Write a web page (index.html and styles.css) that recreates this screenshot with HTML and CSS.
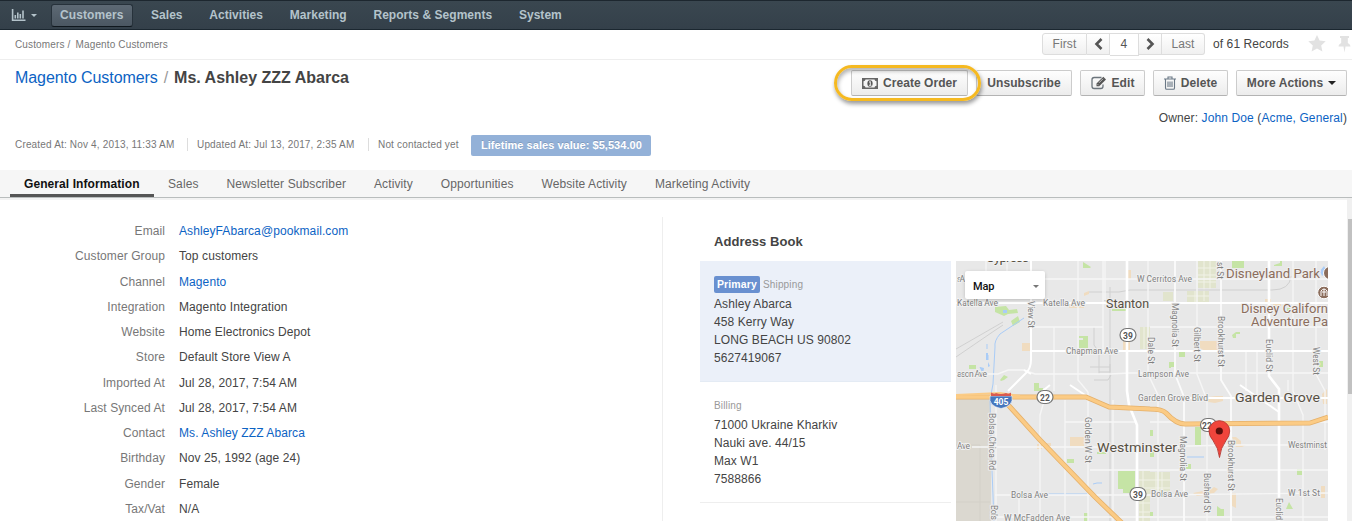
FILE: index.html
```html
<!DOCTYPE html>
<html lang="en">
<head>
<meta charset="utf-8">
<title>Ms. Ashley ZZZ Abarca - Magento Customers</title>
<link rel="stylesheet" href="styles.css">
</head>
<body>
<nav class="topbar">
  <a class="dash">
    <svg width="15" height="12" viewBox="0 0 15 12"><path d="M1.600 0V11.200H14.500M4.300 9.500V6M6.800 9.500V3.500M9.300 9.500V5M12 9.500V1.500" fill="none" stroke="#b4c3cb" stroke-width="1.600"/></svg>
    <i class="caret"></i>
  </a>
  <a class="item active">Customers</a>
  <a class="item">Sales</a>
  <a class="item">Activities</a>
  <a class="item">Marketing</a>
  <a class="item">Reports &amp; Segments</a>
  <a class="item">System</a>
</nav>
<header class="crumbs">
  <div class="trail"><span>Customers</span><span class="sep">/</span><span>Magento Customers</span></div>
  <div class="pager">
    <div class="pages">
      <a class="first">First</a>
      <a class="arrow"><svg width="9" height="12" viewBox="0 0 9 12"><path d="M7.5 1 2.5 6l5 5" fill="none" stroke="#555" stroke-width="2.6"/></svg></a>
      <a class="num">4</a>
      <a class="arrow"><svg width="9" height="12" viewBox="0 0 9 12"><path d="M1.5 1l5 5-5 5" fill="none" stroke="#555" stroke-width="2.6"/></svg></a>
      <a class="last">Last</a>
    </div>
    <span class="total">of 61 Records</span>
    <svg class="star" width="18" height="17" viewBox="0 0 18 17"><path d="M9 0l2.6 5.6 6.1.7-4.5 4.2 1.2 6L9 13.5l-5.4 3 1.2-6L.3 6.3l6.1-.7z" fill="#e2e2e2"/></svg>
    <svg class="pin" width="13" height="17" viewBox="0 0 13 17"><path d="M2 0h9v2H9.800v5c1.500.7 2.700 2 2.700 3.500H7.500L6.500 16.500 5.500 10.500H.5C.5 9 1.700 7.700 3.200 7V2H2z" fill="#e2e2e2"/></svg>
  </div>
</header>
<section class="heading">
  <h1><a>Magento Customers</a><span class="slash">/</span><b>Ms. Ashley ZZZ Abarca</b></h1>
  <div class="actions">
    <div class="marked">
      <a class="btn create"><svg width="16" height="11" viewBox="0 0 16 11"><path d="M0 0h16v11H0zM3.500 1.500Q3.300 3 1.500 3.300V7.700Q3.300 8 3.500 9.500H12.500Q12.700 8 14.500 7.700V3.300Q12.700 3 12.500 1.500z" fill="#666" fill-rule="evenodd"/><ellipse cx="8" cy="5.500" rx="2.600" ry="3.300" fill="#555"/><path d="M7 4.300l1.300-.8v3.500M6.900 7.300h2.500" stroke="#eee" stroke-width="1" fill="none"/></svg>Create Order</a>
      <i class="ring"></i>
    </div>
    <a class="btn unsub">Unsubscribe</a>
    <a class="btn edit"><svg width="16" height="14" viewBox="0 0 16 14"><path d="M10.500 1.500H3.200Q1 1.500 1 3.700v6.600q0 2.200 2.200 2.200h6.600q2.200 0 2.200-2.200V8.500" fill="none" stroke="#6c757c" stroke-width="1.300"/><path d="M5.500 10.200V7.500L12.300.7l2.700 2.700-6.800 6.800z" fill="#555"/><path d="M6.600 8.200l1 1M8 6.800l4-4" stroke="#ddd" stroke-width=".8"/></svg>Edit</a>
    <a class="btn delete"><svg width="12" height="14" viewBox="0 0 12 14"><path d="M0 3h12M4 3V1h4v2M1.500 3v9q0 1.300 1.200 1.300h6.600q1.200 0 1.200-1.300V3M4 5.500v5.500M6 5.500v5.500M8 5.500v5.500" fill="none" stroke="#6a7886" stroke-width="1.100"/></svg>Delete</a>
    <a class="btn more">More Actions<i class="caret dark"></i></a>
  </div>
</section>
<div class="owner">Owner: <a>John Doe</a> (<a>Acme, General</a>)</div>
<ul class="stats">
  <li>Created At: Nov 4, 2013, 11:33 AM</li>
  <li>Updated At: Jul 13, 2017, 2:35 AM</li>
  <li>Not contacted yet</li>
  <li class="value">Lifetime sales value: $5,534.00</li>
</ul>
<nav class="tabs">
  <a class="on">General Information</a><a>Sales</a><a>Newsletter Subscriber</a><a>Activity</a><a>Opportunities</a><a>Website Activity</a><a>Marketing Activity</a>
</nav>
<main class="content">
  <dl class="details">
    <dt>Email</dt><dd><a>AshleyFAbarca@pookmail.com</a></dd>
    <dt>Customer Group</dt><dd>Top customers</dd>
    <dt>Channel</dt><dd><a>Magento</a></dd>
    <dt>Integration</dt><dd>Magento Integration</dd>
    <dt>Website</dt><dd>Home Electronics Depot</dd>
    <dt>Store</dt><dd>Default Store View A</dd>
    <dt>Imported At</dt><dd>Jul 28, 2017, 7:54 AM</dd>
    <dt>Last Synced At</dt><dd>Jul 28, 2017, 7:54 AM</dd>
    <dt>Contact</dt><dd><a>Ms. Ashley ZZZ Abarca</a></dd>
    <dt>Birthday</dt><dd>Nov 25, 1992 (age 24)</dd>
    <dt>Gender</dt><dd>Female</dd>
    <dt>Tax/Vat</dt><dd>N/A</dd>
  </dl>
  <section class="book">
    <h2>Address Book</h2>
    <div class="book-body">
      <div class="cards">
        <div class="card primary">
          <div class="types"><span class="tag">Primary</span><span>Shipping</span></div>
          <p>Ashley Abarca</p><p>458 Kerry Way</p><p>LONG BEACH US 90802</p><p>5627419067</p>
        </div>
        <div class="card">
          <div class="types"><span>Billing</span></div>
          <p>71000 Ukraine Kharkiv</p><p>Nauki ave. 44/15</p><p>Max W1</p><p>7588866</p>
        </div>
      </div>
      <div class="map">
        <svg class="canvas" width="372" height="260" viewBox="956 261 372 260">
          <rect x="956" y="261" width="372" height="260" fill="#e8e8e8"/>
          <path d="M956 399H991V521H956z" fill="#dbd8d0"/>
          <path d="M956 445H980V521M956 502H990" fill="none" stroke="#d3d0c8"/>
          <!-- parks -->
          <g fill="#c5e4a5">
            <path d="M1083 262l8 5-1 1h-7zM995 307l11-1 3 4 8-1 1 4-10 1-4 2-9-4zM1011 321l7-5 2 6-7 4zM1079 340h4v-4h5v12h-9zM1079 336h6v2h-6zM969 365h7v4h-7zM1000 380l4-5 4 2-4 3-3 1zM1034 383h5v5h4v3h-9zM1232 261h12v7h-12zM1274 265l6-2v-2h2v5h-8zM1232 335l4-3h4v2h-4v4h-3zM1179 351h6v6h-6zM1169 362h5v5h-3v1h-2zM1319 361h4v6h-4zM1287 308h3v3h-3zM1112 309h14v2h-14zM1118 471h17v22h-12v-4h-5zM1067 459h7v4h-7zM1195 427h6v18h-6zM1150 430h3v6h-3zM1150 451h4v6h-4zM1188 464h3v5h-5v-2h2zM1297 469h5v6h-5zM1217 506l4 3h3v7h-7zM1286 509l3-7 4 7zM1084 513h4v8h-4zM1034 385h3v5h-3zM1097 452h9v2h-9zM1150 512h3v4h-3z"/>
          </g>
          <g fill="#f0dcc0">
            <path d="M1022 343h8v8h-8zM1070 437h14v9h-14zM1200 341h18v9h-10l-3 1-5-3zM1123 340h7v10h-7zM1126 270h5v9h-5zM1069 304l7 2 8-1v3h-15zM1084 293l5-2v3l-5 2zM1265 299h6v3h-6zM1273 302h8v4h-8zM1208 397l8-1h7v5l-8 2-7-1zM1232 437h4l5 4v4h5l-4 2h-6zM1193 493l10-2 3 2 8-6 4 2-4 4-9 2-8 1zM1037 444h5v5h-5zM1045 443h6v6h-6zM1322 394l5-5v15h-4zM1321 486h4v12h-4zM1231 493h5v15l-4-2z"/>
          </g>
          <g fill="#e1e4cd">
            <path d="M1198 261h18v27h-18zM1187 291h22v11h-22zM1163 292h10v9h-10zM1140 327h10v22h-10zM1139 471h11v50h-11zM1150 472h20v23h-20z"/>
          </g>
          <path d="M1204 261V301M1210 261V289M1198 268H1216M1198 275H1216M1198 282H1216M1187 296H1209M1195 291V302M1144 327V349M1143 471V521M1156 472V495M1162 472V495M1139 480H1170M1139 488H1170M1139 503H1150M1139 512H1150" fill="none" stroke="#f1f2e7"/>
          <!-- rail lines -->
          <g fill="none" stroke="#d0d0d0">
            <path d="M956 349L1003 322M956 357L994 331L1003 325M1089 292H1119L1130 290H1272Q1290 290 1291 276M1110 287V521M1094 327V345L1099 352V374M1090 367H1110M1094 380H1108L1111 375M1110 364V372H1099M1104 300L1110 303"/>
          </g>
          <!-- water -->
          <g fill="none" stroke="#a9ccf7">
            <path d="M1024 318L1000 334Q994 341 995 347L993 384 990 400 992 470 994 521M1093 484l4-1 5 0M1187 457h17M1035 494h55M987 344v5M988 355v5M980 367l3 6"/>
          </g>
          <g fill="#a9ccf7"><path d="M1003 310h4v3h-4zM986 353h2v7h-2zM988 362l2 4-2 1zM980 367l4 1-1 6zM1320 271l4-5 3 6-5 4z"/></g>
          <!-- minor streets -->
          <g fill="none" stroke="#f6f6f6" stroke-width="1.400">
            <path d="M956 279H1328M1031 327H1103M1150 327H1328M956 374H998L1008 370H1024L1035 374H1110L1130 373H1328M1065 422H1136M1150 422H1328M972 447H1150L1230 445H1328M1090 470H1328M995 495H1110M1035 495H1150L1328 493M993 517H1328"/>
            <path d="M986 261V279M1007 261V279M1054 327V391M1078 261V380L1088 392M1103 261V351M1105 261V300M1065 400V521M1040 521V415L1045 398 1050 391M1088 392V521M1113 400V521M1148 261V374L1158 395V521M1197 261V374L1207 400V521M1246 350V391M1257 350V395M1293 261V391L1303 415V521M1316 261V374L1325 391V450M1019 498V521M996 385V521M1288 380V391"/>
            <path d="M1175 261V374L1184 397V521M1221 261V380L1231 396V521" stroke="#fbfbfb" stroke-width="1.800"/>
          </g>
          <!-- arterial roads -->
          <g fill="none" stroke="#fff" stroke-width="2">
            <path d="M956 303H1328M1031 351H1328M956 398H1000M1150 398H1328M1031 261V360Q1031 369 1025 374L1008 391M1024 370L1031 374M1050 385L1035 397M1070 385L1088 397M1240 385L1279 412"/>
            <path d="M1127 261V391L1129 405 1137 425V521M1269 261V376L1279 389V521" stroke-width="2.600"/>
          </g>
          <!-- freeways -->
          <g fill="none" stroke-linejoin="round">
            <path d="M956 397H1086L1109 407 1150 409Q1162 409 1166 413Q1176 424 1185 424L1310 423 1328 417M1001 397L1040 440 1095 497 1123 524" stroke="#e5b06a" stroke-width="5"/>
            <path d="M956 397H1086L1109 407 1150 409Q1162 409 1166 413Q1176 424 1185 424L1310 423 1328 417M1001 397L1040 440 1095 497 1123 524" stroke="#fbcb85" stroke-width="3.400"/>
            <path d="M956 395L1000 393 1020 396" stroke="#fbcb85" stroke-width="2"/>
          </g>
          <!-- street labels -->
          <g class="street">
            <text x="957" y="282" textLength="8">s A</text>
            <text x="1137" y="282" textLength="55">W Cerritos Ave</text>
            <text x="957" y="306" textLength="41">Katella Ave</text>
            <text x="1043" y="306" textLength="42">Katella Ave</text>
            <text x="1066" y="354" textLength="52">Chapman Ave</text>
            <text x="957" y="377" textLength="30">ason Ave</text>
            <text x="1138" y="377" textLength="51">Lampson Ave</text>
            <text x="1138" y="401" textLength="70">Garden Grove Blvd</text>
            <text x="957" y="449" textLength="13">Ave</text>
            <text x="1288" y="448" textLength="39">Westminst</text>
            <text x="1011" y="498" textLength="37">Bolsa Ave</text>
            <text x="1151" y="497" textLength="37">Bolsa Ave</text>
            <text x="1288" y="496" textLength="32">W 1st St</text>
            <text x="1004" y="521" textLength="66">W McFadden Ave</text>
            <text transform="translate(1028 301) rotate(90)" textLength="27">View St</text>
            <text transform="translate(1172 303) rotate(90)" textLength="44">Magnolia St</text>
            <text transform="translate(1148 337) rotate(90)" textLength="27">Dale St</text>
            <text transform="translate(1194 327) rotate(90)" textLength="35">Gilbert St</text>
            <text transform="translate(1217 262) rotate(90)" textLength="17">st St</text>
            <text transform="translate(1218 316) rotate(90)" textLength="51">Brookhurst St</text>
            <text transform="translate(1266 339) rotate(90)" textLength="33">Euclid St</text>
            <text transform="translate(1313 347) rotate(90)" textLength="28">West St</text>
            <text transform="translate(989 413) rotate(90)" textLength="57">Bolsa Chica Rd</text>
            <text transform="translate(991 505) rotate(90)" textLength="15">Bols</text>
            <text transform="translate(1085 417) rotate(90)" textLength="46">Golden W St</text>
            <text transform="translate(1180 436) rotate(90)" textLength="45">Magnolia St</text>
            <text transform="translate(1204 473) rotate(90)" textLength="40">Bushard St</text>
            <text transform="translate(1228 440) rotate(90)" textLength="51">Brookhurst St</text>
            <text transform="translate(1276 498) rotate(90)" textLength="22">Euclid</text>
          </g>
          <g class="town">
            <text x="986" y="262" textLength="43">Cypress</text>
            <text x="1106" y="308" textLength="43" lengthAdjust="spacingAndGlyphs">Stanton</text>
            <text x="1097" y="452" textLength="80" lengthAdjust="spacingAndGlyphs">Westminster</text>
            <text x="1235" y="402" textLength="85" lengthAdjust="spacingAndGlyphs">Garden Grove</text>
          </g>
          <g class="sight">
            <text x="1226" y="278" textLength="94" lengthAdjust="spacingAndGlyphs">Disneyland Park</text>
            <text x="1241" y="313" textLength="87" lengthAdjust="spacingAndGlyphs">Disney Californ</text>
            <text x="1251" y="326" textLength="77" lengthAdjust="spacingAndGlyphs">Adventure Pa</text>
          </g>
          <g fill="#8b6d5c" stroke="#fff"><circle cx="1324" cy="292.500" r="6.300"/><circle cx="1330" cy="273" r="6.500"/></g>
          <path d="M1321 296v-5q3-4 6 0v5M1324 289v7M1322 292h4" fill="none" stroke="#fff"/>
          <!-- route shields -->
          <g class="shield">
            <rect x="1120" y="328.500" width="16" height="13" rx="6.500"/><text x="1128" y="338.500">39</text>
            <rect x="1037" y="390.500" width="16" height="13" rx="6.500"/><text x="1045" y="400.500">22</text>
            <rect x="1130" y="487.500" width="16" height="13" rx="6.500"/><text x="1138" y="497.500">39</text>
            <rect x="1200.500" y="418.500" width="16" height="13" rx="6.500"/><text x="1207" y="428.500">22</text>
          </g>
          <path d="M990 396H1012Q1014 406 1001 408.500Q988 406 990 396z" fill="#4676bd" stroke="#fff" stroke-width=".6"/>
          <path d="M991 396V392.500Q994 394.500 996 393Q1001 395 1006 393Q1009 394.500 1011 392.500V396z" fill="#d95a50"/>
          <text class="interstate" x="1001" y="404.500">405</text>
          <path d="M1219.500 457.500Q1218.500 448 1213 440.500Q1209 436 1209 431A10.300 10.300 0 0 1 1229.700 431Q1229.700 436 1226 440.500Q1220.500 448 1219.500 457.500z" fill="#f0453c" stroke="#b6352f" stroke-width=".9"/>
          <circle cx="1219.300" cy="431" r="3.600" fill="#5b0f0c"/>
        </svg>
        <div class="maptype">Map<i class="caret grey"></i></div>
      </div>
    </div>
  </section>
  <div class="scroll"><i></i></div>
</main>
</body>
</html>
```
FILE: styles.css
```css
* { box-sizing: border-box; }
body {
  margin: 0;
  width: 1352px;
  height: 521px;
  overflow: hidden;
  background: #fff;
  color: #444;
  font: 12px/18px "Liberation Sans", Arial, sans-serif;
  letter-spacing: .09px;
  display: flex;
  flex-direction: column;
}
h1, h2, p, ul, dl, dd { margin: 0; padding: 0; }
a { color: #0c63c4; }
svg { display: block; flex: none; }

.caret {
  display: inline-block;
  border: 3px solid transparent;
  border-top-color: #b4c3cb;
  border-bottom: 0;
}
.caret.dark { border: 4px solid transparent; border-top-color: #222; border-bottom: 0; }
.caret.grey { border: 3.5px solid transparent; border-top-color: #777; border-bottom: 0; margin-right: 1px; }

/* top navigation */
.topbar {
  flex: none;
  height: 30px;
  display: flex;
  align-items: center;
  gap: 9px;
  padding-left: 11px;
  background: linear-gradient(#3a4750, #34404a);
  border-top: 1px solid #1d272f;
  border-bottom: 1px solid #1b2730;
}
.dash { display: flex; align-items: center; gap: 5px; width: 31px; }
.topbar .item {
  color: #b4c3cb;
  font-weight: bold;
  line-height: 21px;
  padding: 0 7.700px 0 8px;
  border: 1px solid transparent;
  border-radius: 3px;
  letter-spacing: .04px;
}
.topbar .active {
  width: 82px;
  background: linear-gradient(#5d6974, #4b5762);
  border-color: #27323b;
  border-bottom-color: #10181e;
  letter-spacing: .1px;
}

/* breadcrumbs and record pager */
.crumbs {
  flex: none;
  height: 30px;
  display: flex;
  justify-content: space-between;
  border-bottom: 1px solid #eee;
  padding-left: 15px;
}
.trail { font-size: 10px; line-height: 29px; color: #777; letter-spacing: .14px; }
.sep { margin: 0 5px 0 3px; }
.pager { display: flex; width: 310px; padding-top: 3px; line-height: 20px; }
.pages { display: flex; width: 163px; height: 22px; }
.pages a {
  color: #777;
  text-align: center;
  border: 1px solid #ddd;
  border-left-width: 0;
  background: linear-gradient(#fff, #f0f0f0);
  display: flex;
  align-items: center;
  justify-content: center;
}
.pages .first { width: 45px; border-left-width: 1px; border-radius: 3px 0 0 3px; }
.pages .arrow { width: 23px; }
.pages .num { width: 29px; height: 23px; background: #fff; color: #555; padding-bottom: 1px; }
.pages .last { width: 43px; border-radius: 0 3px 3px 0; }
.total { width: 95px; padding-left: 8px; color: #444; line-height: 22px; }
.star { margin: 2px 0 0 8px; }
.pin { margin: 3px 0 0 12px; }

/* record heading */
.heading {
  flex: none;
  height: 46px;
  display: flex;
  justify-content: space-between;
  padding: 10px 5px 0 15px;
}
h1 { font-size: 16px; font-weight: normal; line-height: 16px; letter-spacing: -.08px; white-space: nowrap; }
h1 b { color: #444; letter-spacing: 0; }
.slash { color: #999; margin: 0 6px 0 6px; }
.actions { display: flex; gap: 8px; }
.btn {
  height: 26px;
  display: flex;
  align-items: center;
  justify-content: center;
  gap: 5px;
  border: 1px solid #ccc;
  border-bottom-color: #b3b3b3;
  border-radius: 2px;
  background: linear-gradient(#fefefe, #ececec);
  color: #555;
  font-weight: bold;
  letter-spacing: .06px;
}
.create { width: 117px; }
.unsub { width: 96px; }
.edit { width: 65px; }
.delete { width: 75px; }
.more { width: 111px; }
.marked { position: relative; z-index: 1; }
.ring {
  position: absolute;
  left: -17px;
  top: -5px;
  width: 147px;
  height: 36px;
  border: 3px solid #f5b921;
  border-radius: 18px;
  box-shadow: 1px 3px 4px rgba(0,0,0,.4), inset 1px 3px 4px rgba(0,0,0,.3);
}
.owner { flex: none; height: 29px; padding: 3px 5px 0 0; text-align: right; letter-spacing: .11px; }

/* record statistics */
.stats {
  flex: none;
  height: 35px;
  display: flex;
  align-items: flex-start;
  padding-left: 15px;
  list-style: none;
  font-size: 10px;
  color: #777;
  letter-spacing: .17px;
}
.stats li { line-height: 13px; margin-top: 3px; padding-right: 13px; white-space: nowrap; }
.stats li:nth-child(-n+2) { border-right: 1px solid #ddd; margin-right: 9px; }
.stats li:nth-child(1) { width: 173px; }
.stats li:nth-child(2) { width: 172px; }
.stats li:nth-child(3) { width: 93px; padding: 0; }
.stats .value {
  margin-top: 0;
  width: 180px;
  padding: 0 0 0 10px;
  background: #93b1d8;
  border-radius: 2px;
  color: #fff;
  font-weight: bold;
  font-size: 11px;
  line-height: 21px;
  letter-spacing: .04px;
  text-shadow: 0 -1px 0 rgba(0,0,0,.15);
}

/* section tabs */
.tabs {
  flex: none;
  height: 28px;
  display: flex;
  padding-left: 10px;
  background: #f6f6f6;
  border-bottom: 1px solid #b9bdbd;
}
.tabs a { padding: 5px 14px 0; color: #666; border-bottom: 3px solid transparent; letter-spacing: .1px; }
.tabs .on { width: 144px; color: #111; font-weight: bold; border-color: #555; letter-spacing: .08px; }

/* scrolled record body */
.content { flex: 1; min-height: 0; display: flex; overflow: hidden; box-shadow: inset 0 2px 0 #f3f3f3; }
.details {
  width: 663px;
  height: 400px;
  margin-top: 19px;
  padding-top: 1px;
  border-right: 1px solid #eee;
  display: grid;
  grid-template-columns: 165px 1fr;
  grid-auto-rows: 25.27px;
  column-gap: 14px;
  align-content: start;
  line-height: 27px;
}
.details dt { color: #777; text-align: right; }
.book { width: 684px; padding: 34px 0 0 37px; }
h2 { font-size: 13px; line-height: 20px; padding-left: 14px; margin-bottom: 9px; color: #444; letter-spacing: .05px; }
.book-body { display: flex; gap: 5px; }
.cards { width: 251px; }
.card { height: 121px; padding: 15px 14px 0; border-bottom: 1px solid #eee; }
.card.primary { background: #ebf0f9; border-color: #e4ebf4; }
.types { display: flex; gap: 3px; height: 19px; line-height: 17px; font-size: 10px; color: #999; letter-spacing: .15px; }
.tag {
  width: 46px;
  height: 17px;
  text-align: center;
  font-size: 10.500px;
  background: #6990d0;
  color: #fff;
  font-weight: bold;
  border-radius: 2px;
}
.map { position: relative; width: 372px; height: 260px; }
.maptype {
  position: absolute;
  left: 9px;
  top: 10px;
  width: 80px;
  height: 28px;
  padding: 2px 5px 0 8px;
  display: flex;
  align-items: center;
  justify-content: space-between;
  background: #fff;
  border-radius: 2px;
  box-shadow: 0 1px 4px -1px rgba(0,0,0,.3);
  color: #111;
  font: 500 11px Roboto, sans-serif;
  letter-spacing: -.1px;
}
.canvas text { font-family: Roboto, sans-serif; letter-spacing: 0; paint-order: stroke; stroke: #f0f0f0; stroke-width: 2px; stroke-linejoin: round; }
.street { font-size: 8.500px; fill: #808080; }
.town { font-size: 13.500px; fill: #574f43; }
.sight { font-size: 13.500px; fill: #8b6d5c; }
.shield rect { fill: #fff; stroke: #777; stroke-width: 1.200; }
.canvas .shield text, .canvas .interstate { font-size: 8.500px; font-weight: bold; text-anchor: middle; fill: #555; stroke: none; }
.canvas .interstate { fill: #fff; }
.scroll { width: 5px; background: #f0f0f0; padding: 21px 0 0 1px; }
.scroll i { display: block; height: 175px; background: #c1c1c1; }
```
